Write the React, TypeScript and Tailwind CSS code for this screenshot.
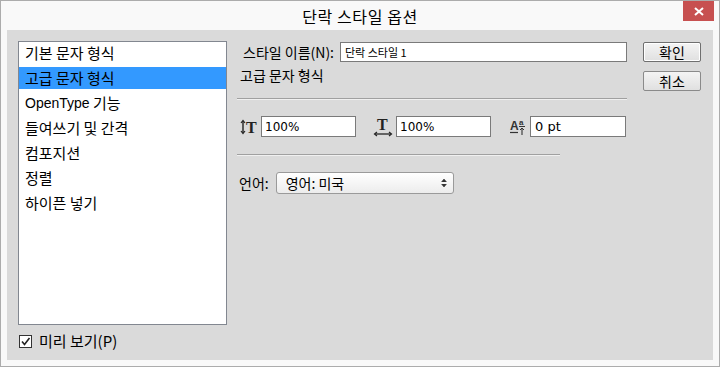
import React from "react";

const KR = { fontFamily: '"Malgun Gothic", "Noto Sans CJK KR", "Noto Sans", sans-serif' };
const LAT = { fontFamily: '"Liberation Sans", Arial, sans-serif' };
const NUM = { fontFamily: "Tahoma, 'DejaVu Sans', sans-serif" };

function VScaleIcon() {
  return (
    <svg width="18" height="16" viewBox="0 0 18 16" className="shrink-0">
      <line x1="3" y1="2" x2="3" y2="14" stroke="#222" strokeWidth="1.4" />
      <polyline points="1,4 3,1.5 5,4" fill="none" stroke="#222" strokeWidth="1.2" />
      <polyline points="1,12 3,14.5 5,12" fill="none" stroke="#222" strokeWidth="1.2" />
      <text x="6" y="14" fontFamily="Liberation Serif, serif" fontWeight="bold" fontSize="16" fill="#222">T</text>
    </svg>
  );
}

function HScaleIcon() {
  return (
    <svg width="20" height="20" viewBox="0 0 20 20" className="shrink-0">
      <text x="4" y="13" fontFamily="Liberation Serif, serif" fontWeight="bold" fontSize="16" fill="#222">T</text>
      <line x1="2" y1="17" x2="18" y2="17" stroke="#222" strokeWidth="1.3" />
      <polyline points="4,15 1.5,17 4,19" fill="none" stroke="#222" strokeWidth="1.2" />
      <polyline points="16,15 18.5,17 16,19" fill="none" stroke="#222" strokeWidth="1.2" />
    </svg>
  );
}

function BaselineIcon() {
  return (
    <svg width="18" height="18" viewBox="0 0 18 18" className="shrink-0">
      <text x="1" y="12" fontFamily="Liberation Sans, sans-serif" fontWeight="bold" fontSize="12" fill="#333">A</text>
      <line x1="1" y1="14.5" x2="9" y2="14.5" stroke="#333" strokeWidth="1.2" />
      <text x="10" y="7" fontFamily="Liberation Sans, sans-serif" fontWeight="bold" fontSize="8" fill="#333">a</text>
      <line x1="10" y1="8.5" x2="16" y2="8.5" stroke="#333" strokeWidth="1" />
      <line x1="13" y1="10" x2="13" y2="17" stroke="#333" strokeWidth="1.1" />
      <polyline points="11,12 13,10 15,12" fill="none" stroke="#333" strokeWidth="1" />
    </svg>
  );
}

const items: React.ReactNode[] = [
  "기본 문자 형식",
  "고급 문자 형식",
  <>
    <span className="text-[14px]" style={LAT}>OpenType</span>
    <span>&nbsp;기능</span>
  </>,
  "들여쓰기 및 간격",
  "컴포지션",
  "정렬",
  "하이픈 넣기",
];

export default function App() {
  return (
    <div className="w-[720px] h-[367px] border border-[#acacac] bg-[#f9f9f9] flex flex-col relative" style={KR}>
      <div className="h-[29px] flex items-center justify-center text-[16px] text-black tracking-[0.6px]">
        단락 스타일 옵션
      </div>
      <div className="absolute right-[5px] top-0 w-[31px] h-[20px] bg-[#c75050] flex items-center justify-center">
        <svg width="10" height="9" viewBox="0 0 10 9">
          <line x1="1" y1="1" x2="9" y2="8" stroke="white" strokeWidth="2" />
          <line x1="9" y1="1" x2="1" y2="8" stroke="white" strokeWidth="2" />
        </svg>
      </div>
      <div className="flex-1 mx-[6px] mb-[6px] bg-[#dadada] flex pl-[11px] pt-[11px]">
        <div className="flex flex-col w-[209px]">
          <div className="h-[284px] bg-white border border-[#828790] flex flex-col gap-[3px] text-[15px] text-black">
            {items.map((t, i) => (
              <div
                key={i}
                className={
                  "h-[22px] flex items-center pl-[6px] " + (i === 1 ? "bg-[#3399ff]" : "")
                }
              >
                {t}
              </div>
            ))}
          </div>
          <div className="flex items-center mt-[5px] ml-[1px] gap-[7px] text-[15px]">
            <div className="w-[13px] h-[13px] border border-[#333] bg-white flex items-center justify-center">
              <svg width="11" height="11" viewBox="0 0 11 11">
                <polyline points="2,5.5 4.5,8.5 9.5,2" fill="none" stroke="#222" strokeWidth="1.6" />
              </svg>
            </div>
            <span>미리 보기(P)</span>
          </div>
        </div>
        <div className="flex ml-[10px] pt-[1px]">
          <div className="w-[390px] flex flex-col">
            <div className="h-[20px] flex items-center pl-[6px] text-[14px]">
              <span>스타일 이름(N):</span>
              <div className="ml-auto w-[287px] h-[20px] bg-white border border-[#7a7a7a] flex items-center pl-[4px] text-[11px]">
                단락 스타일 1
              </div>
            </div>
            <div className="mt-[3px] h-[20px] flex items-center pl-[3px] text-[14px]">고급 문자 형식</div>
            <div className="mt-[13px] h-px bg-[#a0a0a0] border-b border-[#f0f0f0] box-content" />
            <div className="mt-[16px] h-[21px] flex items-center pl-[3px] text-[12px]">
              <VScaleIcon />
              <div className="ml-[3px] w-[95px] h-[21px] bg-white border border-[#7a7a7a] flex items-center pl-[3px]" style={NUM}>
                100%
              </div>
              <div className="ml-[17px]"><HScaleIcon /></div>
              <div className="ml-[3px] w-[95px] h-[21px] bg-white border border-[#7a7a7a] flex items-center pl-[3px]" style={NUM}>
                100%
              </div>
              <div className="ml-[18px]"><BaselineIcon /></div>
              <div className="ml-[3px] w-[96px] h-[21px] bg-white border border-[#7a7a7a] flex items-center pl-[4px] text-[13px]" style={NUM}>
                0 pt
              </div>
            </div>
            <div className="mt-[17px] w-[323px] h-px bg-[#a0a0a0] border-b border-[#f0f0f0] box-content" />
            <div className="mt-[16px] h-[22px] flex items-center pl-[2px] text-[14px]">
              <span>언어:</span>
              <div className="ml-[7px] w-[178px] h-[22px] rounded-[3px] border border-[#9a9a9a] bg-gradient-to-b from-white to-[#ececec] flex items-center pl-[9px] pr-[6px]">
                <span>영어: 미국</span>
                <svg className="ml-auto" width="6" height="10" viewBox="0 0 6 10">
                  <polyline points="0.5,4 3,1 5.5,4" fill="#333" stroke="#333" strokeWidth="0.6" />
                  <polyline points="0.5,6 3,9 5.5,6" fill="#333" stroke="#333" strokeWidth="0.6" />
                </svg>
              </div>
            </div>
          </div>
          <div className="ml-[16px] flex flex-col gap-[9px] text-[14px]">
            <div className="w-[58px] h-[20px] border border-[#6f6f6f] rounded-[2px] bg-gradient-to-b from-[#f4f4f4] to-[#e0e0e0] flex items-center justify-center shadow-[inset_0_0_0_1px_#ffffff]">
              확인
            </div>
            <div className="w-[58px] h-[20px] border border-[#8a8a8a] rounded-[2px] bg-gradient-to-b from-[#f4f4f4] to-[#e0e0e0] flex items-center justify-center">
              취소
            </div>
          </div>
        </div>
      </div>
    </div>
  );
}
